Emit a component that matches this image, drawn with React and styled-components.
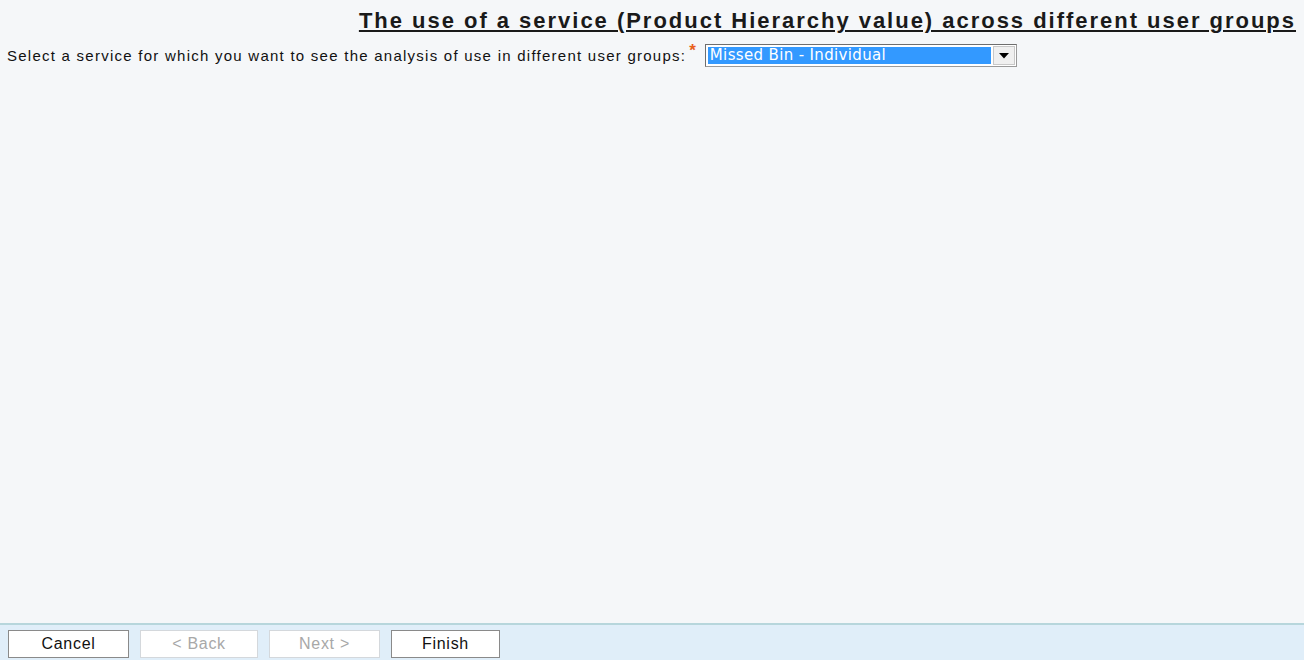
import styled, { createGlobalStyle } from 'styled-components';

const GlobalStyle = createGlobalStyle`
  html, body {
    margin: 0;
    padding: 0;
    background: #f5f7f9;
  }
  body {
    font-family: "Liberation Sans", Arial, sans-serif;
    color: #111;
  }
`;

const Page = styled.div`
  height: 660px;
  display: flex;
  flex-direction: column;
`;

const Content = styled.div`
  flex: 1;
  padding: 6px 9px 0 7px;
`;

const Title = styled.h1`
  margin: 0;
  text-align: right;
  font-size: 22px;
  font-weight: bold;
  text-decoration: underline;
  text-underline-offset: 2px;
  line-height: 29px;
  color: #1a1a1a;
  letter-spacing: 1.98px;
  margin-right: -1px;
`;

const Row = styled.div`
  display: flex;
  align-items: center;
  margin-top: 9px;
`;

const Label = styled.label`
  font-size: 15px;
  letter-spacing: 1.25px;
  color: #111;
`;

const Required = styled.span`
  color: #e8601c;
  font-size: 17px;
  align-self: flex-start;
  margin: -3px 9px 0 3px;
  font-weight: bold;
`;

const SelectBox = styled.div`
  width: 312px;
  height: 23px;
  box-sizing: border-box;
  display: flex;
  align-items: stretch;
  background: #fff;
  border: 1px solid #9a9a9a;
  border-top-color: #6e6e6e;
  border-left-color: #6e6e6e;
  padding: 2px;
`;

const SelectValue = styled.div`
  flex: 1;
  background: #3399ff;
  color: #fff;
  font-family: "DejaVu Sans", Verdana, sans-serif;
  font-size: 15px;
  letter-spacing: 0.35px;
  line-height: 17px;
  padding-left: 2px;
  margin-right: 2px;
`;

const Arrow = styled.div`
  width: 22px;
  box-sizing: border-box;
  background: #f0f0f0;
  border: 1px solid #c8c8c8;
  margin: -1px -1px -1px 0;
  display: flex;
  align-items: center;
  justify-content: center;
`;

const Footer = styled.div`
  height: 37px;
  box-sizing: border-box;
  border-top: 2px solid #b7d6dc;
  background: #e0eef9;
  display: flex;
  align-items: center;
  gap: 11px;
  padding: 2px 0 0 8px;
`;

const Button = styled.button`
  width: ${(p) => p.$w}px;
  height: 28px;
  box-sizing: border-box;
  background: #fff;
  border: 1px solid ${(p) => (p.disabled ? '#d4d8dc' : '#8a8a8a')};
  color: ${(p) => (p.disabled ? '#a8a8a8' : '#111')};
  font-family: "Liberation Sans", Arial, sans-serif;
  font-size: 16px;
  letter-spacing: 0.7px;
  padding: 0;
`;

export default function App() {
  return (
    <>
      <GlobalStyle />
      <Page>
        <Content>
          <Title>The use of a service (Product Hierarchy value) across different user groups</Title>
          <Row>
            <Label>Select a service for which you want to see the analysis of use in different user groups:</Label>
            <Required>*</Required>
            <SelectBox>
              <SelectValue>Missed Bin - Individual</SelectValue>
              <Arrow>
                <svg width="10" height="6" viewBox="0 0 10 6">
                  <path d="M0 0 H10 L5 5.5 Z" fill="#000" />
                </svg>
              </Arrow>
            </SelectBox>
          </Row>
        </Content>
        <Footer>
          <Button $w={121}>Cancel</Button>
          <Button $w={118} disabled>&lt; Back</Button>
          <Button $w={111} disabled>Next &gt;</Button>
          <Button $w={109}>Finish</Button>
        </Footer>
      </Page>
    </>
  );
}
